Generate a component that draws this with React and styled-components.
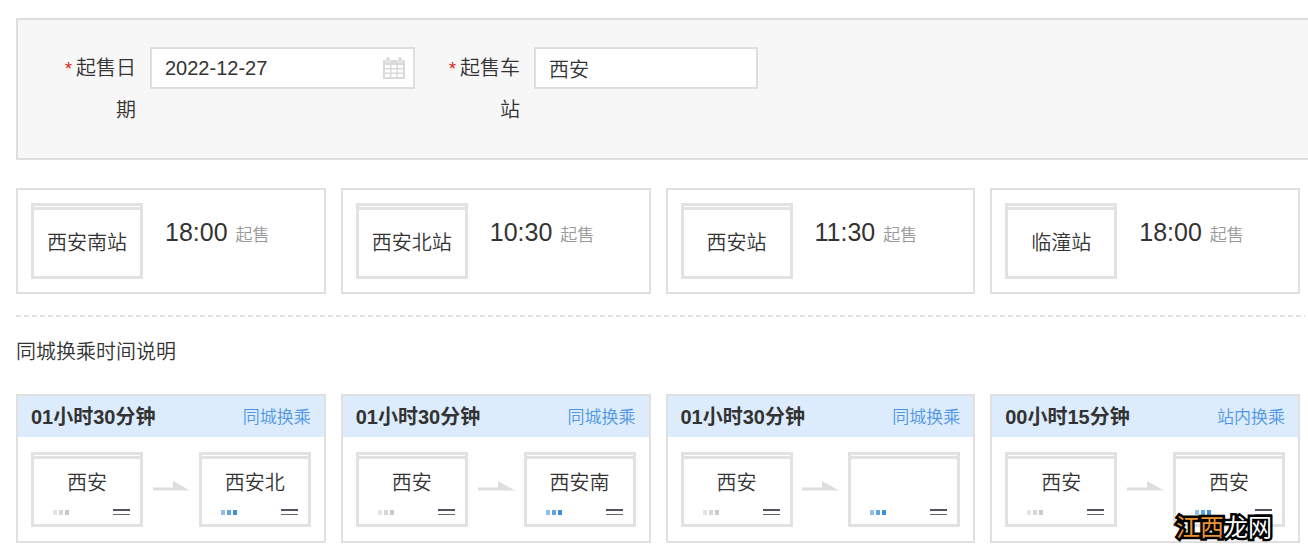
import React from 'react';
import styled, { createGlobalStyle } from 'styled-components';

const GlobalStyle = createGlobalStyle`
  * {
    box-sizing: border-box;
  }

  body {
    margin: 0;
    background: #fff;
    color: #333;
    font-family: 'Liberation Sans', 'Noto Sans CJK SC', sans-serif;
    font-size: 20px;
    font-weight: 350;
    overflow-x: hidden;
  }
`;

const Page = styled.main`
  position: relative;
  padding: 18px 8px 15px 16px;
`;

// Search panel, bleeds off the right side of the page
const SearchPanel = styled.form`
  display: flex;
  flex-wrap: wrap;
  gap: 17px;
  margin-right: -8px;
  padding: 27px 30px;
  border: 2px solid #dedede;
  border-right: 0;
  background: #f7f7f7;
`;

const Field = styled.div`
  display: flex;
  align-items: flex-start;
  gap: 14px;
`;

const FieldLabel = styled.label`
  width: 88px;
  line-height: 42px;
  text-align: right;
`;

const Required = styled.span`
  margin-right: 4px;
  color: #e02020;
  font-size: 18px;
  line-height: 1;
`;

const InputBox = styled.div`
  display: flex;
  align-items: center;
  width: ${({ $wide }) => ($wide ? '265px' : '224px')};
  height: 42px;
  padding: 0 7px 0 13px;
  border: 2px solid #dedede;
  background: #fff;
`;

const TextInput = styled.input`
  flex: 1;
  min-width: 0;
  height: 38px;
  padding: 0;
  border: 0;
  outline: 0;
  background: transparent;
  color: #333;
  font: inherit;
`;

// Four equal columns shared by both card lists
const CardGrid = styled.div`
  display: grid;
  grid-template-columns: repeat(4, 1fr);
  gap: 15px;
`;

const StationGrid = styled(CardGrid)`
  margin-top: 28px;
`;

const StationCard = styled.article`
  display: flex;
  gap: 22px;
  padding: 13px;
  border: 2px solid #e0e0e0;
`;

// Station sign with a double bar on top
const Sign = styled.div`
  flex: none;
  display: flex;
  flex-direction: column;
  width: 112px;
  height: ${({ $tall }) => ($tall ? '76px' : '75px')};
  padding-top: 1px;
  border: 3px solid #e2e2e2;

  &::before {
    content: '';
    height: 3px;
    background: #e2e2e2;
  }
`;

const StationName = styled.span`
  flex: 1;
  display: flex;
  align-items: center;
  justify-content: center;
  padding-bottom: 3px;
  white-space: nowrap;
`;

const SaleTime = styled.p`
  margin: 14px 0 0;
  font-size: 25px;
  line-height: 30px;
  white-space: nowrap;
`;

const SaleNote = styled.span`
  margin-left: 8px;
  color: #999;
  font-size: 17px;
`;

const Divider = styled.hr`
  height: 2px;
  margin: 21px -5px 0 0;
  border: 0;
  background: repeating-linear-gradient(90deg, #dedede 0 5px, transparent 5px 8px);
`;

const SectionTitle = styled.h2`
  margin: 21px 0 27px;
  font-size: 20px;
  font-weight: inherit;
  line-height: 29px;
`;

const TransferCard = styled.article`
  border: 2px solid #e0e0e0;
`;

const TransferHeader = styled.header`
  display: flex;
  align-items: center;
  justify-content: space-between;
  height: 41px;
  padding: 0 13px 3px;
  background: #dcecfc;
  white-space: nowrap;
`;

const Duration = styled.strong`
  font-size: 20px;
  font-weight: 700;
`;

const TransferType = styled.span`
  color: #5096e4;
  font-size: 17px;
`;

const Route = styled.div`
  display: flex;
  align-items: center;
  justify-content: space-between;
  padding: 15px 13px 14px;

  > svg {
    margin-bottom: 8px;
  }
`;

const SignFooter = styled.div`
  display: flex;
  align-items: center;
  justify-content: space-between;
  height: 18px;
  padding: 0 10px 6px 19px;
`;

const Watermark = styled.div`
  position: absolute;
  right: 36px;
  bottom: 14px;
  color: #fff;
  font-size: 24px;
  font-weight: 400;
  line-height: 32px;
  -webkit-text-stroke: 5px #000;
  stroke-linejoin: round;
  paint-order: stroke fill;

  em {
    color: #ec9430;
    font-style: normal;
  }
`;

const CalendarIcon = () => (
  <svg width="24" height="24" viewBox="0 0 24 24" aria-hidden="true">
    <path d="M1 4h22v19H1z" fill="#dadada" />
    <path
      d="M3 9h5v3H3zM9.500 9h5v3h-5zM16 9h5v3h-5zM3 13.500h5v3H3zM9.500 13.500h5v3h-5zM16 13.500h5v3h-5zM3 18h5v3H3zM9.500 18h5v3h-5zM16 18h5v3h-5z"
      fill="#fff"
    />
    <path d="M4 1h4v5H4zM16 1h4v5h-4z" fill="#dadada" stroke="#fff" strokeWidth="0.600" />
  </svg>
);

const ArrowIcon = () => (
  <svg width="38" height="10" viewBox="0 0 38 10" aria-hidden="true">
    <path d="M1 6.500h20V0l17 9.500H1z" fill="#dedede" />
  </svg>
);

const Dots = ({ active }) => {
  const colors = active ? ['#92bfec', '#62a3e2', '#3f8fdb'] : ['#e4e4e4', '#d6d6d6', '#c9c9c9'];
  return (
    <svg width="16" height="5" viewBox="0 0 16 5" aria-hidden="true">
      {colors.map((color, i) => (
        <rect key={color} x={i * 6} width="4" height="5" fill={color} />
      ))}
    </svg>
  );
};

const Lines = () => (
  <svg width="17" height="6" viewBox="0 0 17 6" aria-hidden="true">
    <path d="M0 0h17v2H0z" fill="#55505f" />
    <path d="M0 5h17v1H0z" fill="#66616f" />
  </svg>
);

const TransferSign = ({ name, active }) => (
  <Sign>
    <StationName>{name}</StationName>
    <SignFooter>
      <Dots active={active} />
      <Lines />
    </SignFooter>
  </Sign>
);

const stations = [
  { name: '西安南站', time: '18:00' },
  { name: '西安北站', time: '10:30' },
  { name: '西安站', time: '11:30' },
  { name: '临潼站', time: '18:00' },
];

const transfers = [
  { duration: '01小时30分钟', type: '同城换乘', from: '西安', to: '西安北' },
  { duration: '01小时30分钟', type: '同城换乘', from: '西安', to: '西安南' },
  { duration: '01小时30分钟', type: '同城换乘', from: '西安', to: '' },
  { duration: '00小时15分钟', type: '站内换乘', from: '西安', to: '西安' },
];

const App = () => (
  <>
    <GlobalStyle />
    <Page lang="zh-CN">
      <SearchPanel>
        <Field>
          <FieldLabel htmlFor="sale-date">
            <Required>*</Required>起售日期
          </FieldLabel>
          <InputBox $wide>
            <TextInput id="sale-date" type="text" defaultValue="2022-12-27" />
            <CalendarIcon />
          </InputBox>
        </Field>
        <Field>
          <FieldLabel htmlFor="sale-station">
            <Required>*</Required>起售车站
          </FieldLabel>
          <InputBox>
            <TextInput id="sale-station" type="text" defaultValue="西安" />
          </InputBox>
        </Field>
      </SearchPanel>

      <StationGrid>
        {stations.map(({ name, time }) => (
          <StationCard key={name}>
            <Sign $tall>
              <StationName>{name}</StationName>
            </Sign>
            <SaleTime>
              {time}
              <SaleNote>起售</SaleNote>
            </SaleTime>
          </StationCard>
        ))}
      </StationGrid>

      <Divider />
      <SectionTitle>同城换乘时间说明</SectionTitle>

      <CardGrid>
        {transfers.map(({ duration, type, from, to }, i) => (
          <TransferCard key={i}>
            <TransferHeader>
              <Duration>{duration}</Duration>
              <TransferType>{type}</TransferType>
            </TransferHeader>
            <Route>
              <TransferSign name={from} />
              <ArrowIcon />
              <TransferSign name={to} active />
            </Route>
          </TransferCard>
        ))}
      </CardGrid>

      <Watermark>
        <em>江西</em>龙网
      </Watermark>
    </Page>
  </>
);

export default App;
